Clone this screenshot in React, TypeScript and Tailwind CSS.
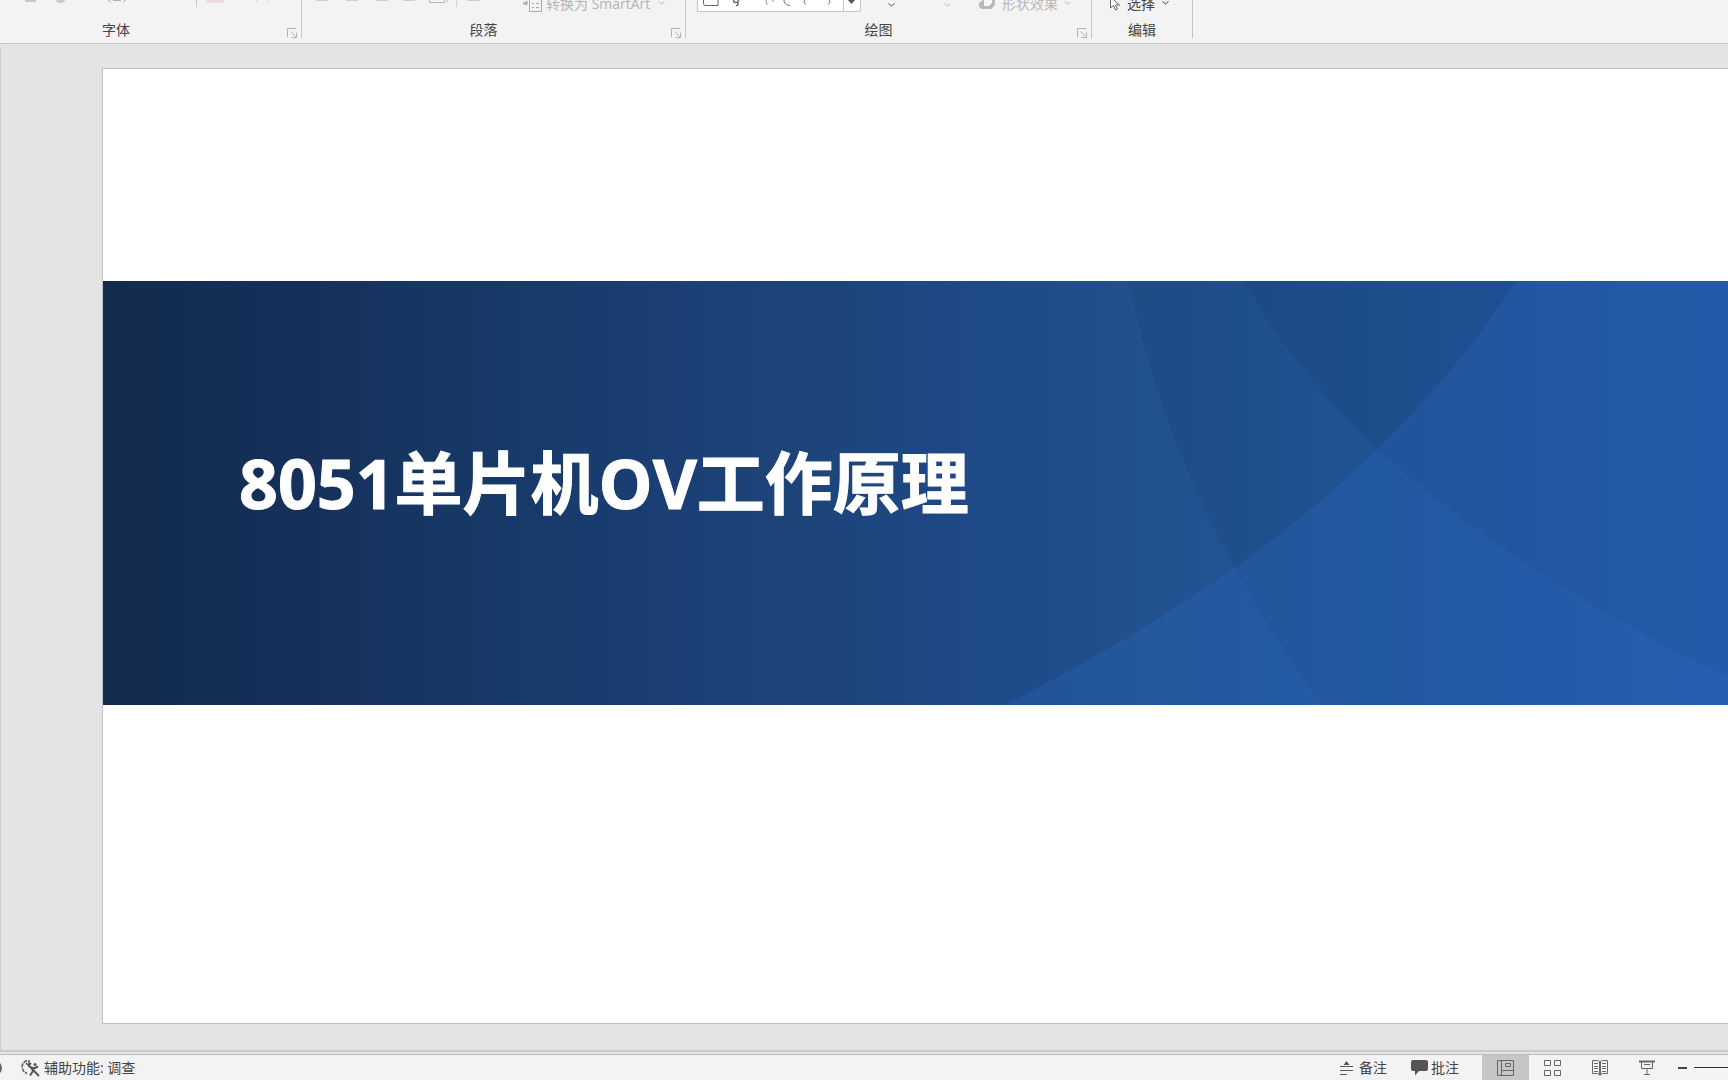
import { type ReactNode } from "react";

type GroupProps = {
  label: string;
  className: string;
  launcher?: boolean;
  children: ReactNode;
};

// Grupo de la cinta: controles arriba, nombre abajo
const RibbonGroup = ({ label, className, launcher = true, children }: GroupProps) => (
  <section className={`flex h-[38px] shrink-0 flex-col border-r border-[#c4c4c4] ${className}`}>
    <div className="flex h-3 items-end">{children}</div>
    <div className="flex flex-1 items-end">
      <h2 className="flex-1 text-center text-sm leading-4 text-[#444]">{label}</h2>
      {launcher && (
        <button aria-label={`${label}设置`} className="mr-1 flex w-4 justify-end">
          <svg width="10" height="10" viewBox="0 0 10 10" fill="none" stroke="#b0b0b0">
            <path d="M.5 9V.5H9M3.5 3.5l5 5M9.5 4.5v5h-5" />
          </svg>
        </button>
      )}
    </div>
  </section>
);

const Chevron = ({ className }: { className: string }) => (
  <svg width="7" height="4" viewBox="0 0 7 4" fill="none" stroke="currentColor" className={`shrink-0 ${className}`}>
    <path d="M.5.5l3 2.5 3-2.5" />
  </svg>
);

const Ribbon = () => (
  <header className="flex h-[44px] shrink-0 overflow-hidden border-b border-[#c8c8c8] bg-[#f3f3f3]">
    <RibbonGroup label="字体" className="-ml-[49px] w-[351px]">
      <svg width="340" height="12" viewBox="-49 0 340 12" fill="none" stroke="#c8c8c8">
        <path d="M25 .5h11" strokeWidth="3" />
        <path d="M57 0c1 2 6 2 7 0" strokeWidth="3" />
        <path d="M108 0l3 2M126 0l-3 2M113 .5h8" stroke="#b0b0b0" />
        <path d="M196.500 0v7" />
        <path d="M206 1.500h18" stroke="#eadede" strokeWidth="3" />
        <path d="M256 0l1 1M267 0l1 1" />
      </svg>
    </RibbonGroup>

    <RibbonGroup label="段落" className="w-[384px]">
      <svg width="220" height="12" viewBox="302 0 220 12" fill="none" stroke="#d0d0d0" className="shrink-0">
        <path d="M316 .5h12M346 .5h12M376 .5h12M403 .5h12M467 .5h13" />
        <path d="M429.500 0v2.500h15V0M447 0v2" stroke="#b8b8b8" />
        <path d="M456.500 0v7" />
      </svg>
      <button className="flex items-end text-sm leading-[14px] text-[#b4b4b4]">
        <svg width="20" height="12" viewBox="0 0 20 12" fill="none" stroke="#aaa" className="mr-1">
          <path d="M1 3.500h4M4.500 1v4" strokeWidth="2" />
          <path d="M7.500 0v11.500h12V0M10 3.500h2M14 3.500h3M10 7.500h2M14 7.500h3" />
        </svg>
        <span className="mb-px whitespace-nowrap">转换为 SmartArt</span>
        <Chevron className="mb-[7px] ml-2" />
      </button>
    </RibbonGroup>

    <RibbonGroup label="绘图" className="w-[406px]">
      <svg width="164" height="12" viewBox="0 0 164 12" fill="none" stroke="#666" className="ml-[11px] shrink-0">
        <path d="M.5-1v12.500h163V-1z" fill="#fff" stroke="#c4c4c4" />
        <path d="M146.500 0v11" stroke="#c4c4c4" />
        <path d="M6.500 0v3.500q0 2 2 2H21V0" />
        <path d="M37 0c-2 3.500 5 3 4.500 0M40 2c2 1 1 4-1 3.500" strokeWidth="1.500" />
        <path d="M69 0l1 5M75 0l1.500 2" stroke="#999" />
        <path d="M87 0c0 3 2 5 6 5.500M108 0c-2 2 0 4 1 4.500M132 0c2 2 0 4-1 4.500" />
        <path d="M151 0h7l-3.500 4z" fill="#555" stroke="none" />
      </svg>
      <Chevron className="mb-[5px] ml-[27px] text-[#555]" />
      <Chevron className="mb-[5px] ml-[49px] text-[#b4b4b4]" />
      <button className="ml-[28px] flex items-end text-sm leading-[14px] text-[#b8b8b8]">
        <svg width="17" height="12" viewBox="0 0 17 12" className="mr-[6px]">
          <path d="M0 3L4 0h12v5l-4 4H3L0 7z" fill="#b8b8b8" />
          <path d="M5 0h8v3L10 6H5z" fill="#f6f6f6" />
        </svg>
        <span className="mb-px whitespace-nowrap">形状效果</span>
        <Chevron className="mb-[7px] ml-[6px]" />
      </button>
    </RibbonGroup>

    <RibbonGroup label="编辑" className="w-[101px]" launcher={false}>
      <button className="ml-[18px] flex items-end text-sm leading-[14px] text-[#444]">
        <svg width="10" height="12" viewBox="0 0 10 12" fill="#fff" stroke="#666" className="mr-[7px]">
          <path d="M.5-3v11l3-2.500 2 4.500 2-1-2-4h4z" />
        </svg>
        <span className="mb-px whitespace-nowrap">选择</span>
        <Chevron className="mb-[7px] ml-[7px]" />
      </button>
    </RibbonGroup>
  </header>
);

// Diapositiva con la banda azul del título
const Slide = () => (
  <article className="flex flex-1 flex-col border-y border-l border-[#c2c2c2] bg-white">
    <div className="grow-2 basis-0" />
    <div className="relative flex grow-4 basis-0 items-center overflow-hidden bg-[linear-gradient(90deg,#132b4d_0%,#15305a_12%,#173865_22%,#1b3f74_35%,#1d4479_43%,#1e4886_52%,#21508d_63%,#23579c_78%,#285fb0_100%)]">
      <svg className="absolute inset-0 size-full" viewBox="0 0 1625 424" preserveAspectRatio="none">
        <path d="M1026 0Q1069 218 1219 424H1625V0z" fill="#0a1e46" fillOpacity=".09" />
        <path d="M1141 0Q1259 218 1625 396V0z" fill="#0a1e46" fillOpacity=".09" />
        <path d="M1413 0Q1257 245 901 424H1625V0z" fill="#3a8cff" fillOpacity=".12" />
      </svg>
      <h1 className="relative mb-5 ml-[136px] text-[68px] leading-[80px] font-bold whitespace-nowrap text-white [-webkit-text-stroke:1px_white]">
        8051单片机OV工作原理
      </h1>
    </div>
    <div className="grow-3 basis-0" />
  </article>
);

const StatusBar = () => (
  <footer className="flex h-[26px] shrink-0 items-stretch overflow-hidden border-t border-[#bdbdbd] bg-[#f3f3f3] text-sm leading-4 text-[#444]">
    <svg width="3" height="26" viewBox="0 0 3 26" fill="none" stroke="#666" strokeWidth="2">
      <path d="M-1 8q4 5 0 10" />
    </svg>
    <button className="ml-[18px] flex items-center gap-1">
      <svg width="19" height="18" viewBox="0 0 19 18" fill="none" stroke="#555">
        <path d="M6 1.500C-1 4 0 12 6 14.500" strokeWidth="1.500" strokeDasharray="4 1" />
        <path d="M8 1v6M5 4l3 3 2-3" strokeWidth="1.500" />
        <path d="M8 7.500l5 2 4-2M9 16.500l4-6M10 9l8 8" strokeWidth="2" />
        <circle cx="14" cy="5.500" r="1.500" fill="#555" stroke="none" />
      </svg>
      <span className="whitespace-nowrap">辅助功能: 调查</span>
    </button>

    <button className="ml-auto flex items-center gap-[6px]">
      <svg width="13" height="14" viewBox="0 0 13 14" fill="none" stroke="#555">
        <path d="M3.500 4L6.500 0l3 4z" fill="#555" stroke="none" />
        <path d="M0 5.500h13M0 9.500h13M0 13.500h7" />
      </svg>
      <span>备注</span>
    </button>
    <button className="ml-6 flex items-center gap-[3px]">
      <svg width="17" height="16" viewBox="0 0 17 16" fill="#555">
        <path d="M2 0h13q2 0 2 2v7q0 2-2 2H8l-4 4.500V11H2q-2 0-2-2V2q0-2 2-2z" />
      </svg>
      <span>批注</span>
    </button>

    <div className="ml-[23px] flex">
      <button aria-label="普通视图" aria-pressed="true" className="flex w-[47px] items-center justify-center bg-[#c6c6c6]">
        <svg width="17" height="16" viewBox="0 0 17 16" fill="none" stroke="#666">
          <path d="M.5.5h16v15H.5zM4.500.5v15M4.500 10.500h12M8.500 3.500h5v3h-5z" />
        </svg>
      </button>
      <button aria-label="幻灯片浏览" className="flex w-[47px] items-center justify-center">
        <svg width="17" height="16" viewBox="0 0 17 16" fill="none" stroke="#666">
          <path d="M.5.5h6v5h-6zM10.500.5h6v5h-6zM.5 10.500h6v5h-6zM10.500 10.500h6v5h-6z" />
        </svg>
      </button>
      <button aria-label="阅读视图" className="flex w-[47px] items-center justify-center">
        <svg width="16" height="16" viewBox="0 0 16 16" fill="none" stroke="#666">
          <path d="M.5.5h5L8 2l2.500-1.500h5v13h-5L8 15l-2.500-1.500h-5zM2 3.500h4M2 6.500h4M2 8.500h4M2 11.500h4M10 3.500h4M10 6.500h4M10 8.500h4M10 11.500h4" />
          <path d="M8 2v13" strokeWidth="2" />
        </svg>
      </button>
      <button aria-label="幻灯片放映" className="flex w-[47px] items-center justify-center">
        <svg width="16" height="16" viewBox="0 0 16 16" fill="none" stroke="#666">
          <path d="M0 1.500h16" strokeWidth="2" />
          <path d="M2.500 2v6.500h11V2M5 4.500h6M8 9v5M5 14.500h6" />
        </svg>
      </button>
    </div>

    <button aria-label="缩小" className="ml-2 flex items-center">
      <svg width="9" height="2">
        <path d="M0 1h9" stroke="#444" strokeWidth="2" />
      </svg>
    </button>
    <div className="ml-[7px] flex w-[34px] items-center overflow-hidden">
      <input
        type="range"
        aria-label="缩放"
        defaultValue={100}
        className="h-px w-[140px] shrink-0 appearance-none bg-[#333] [&::-webkit-slider-thumb]:appearance-none"
      />
    </div>
  </footer>
);

const App = () => {
  return (
    <div className="flex h-screen flex-col overflow-hidden bg-[#e4e4e4] font-['Open_Sans','Noto_Sans_CJK_SC',sans-serif]">
      <Ribbon />
      <main className="mt-[3px] mb-[2px] flex flex-1 flex-col border-b-2 border-l border-[#cbcbcb] pt-[21px] pb-[26px] pl-[101px]">
        <Slide />
      </main>
      <StatusBar />
    </div>
  );
};

export default App;
